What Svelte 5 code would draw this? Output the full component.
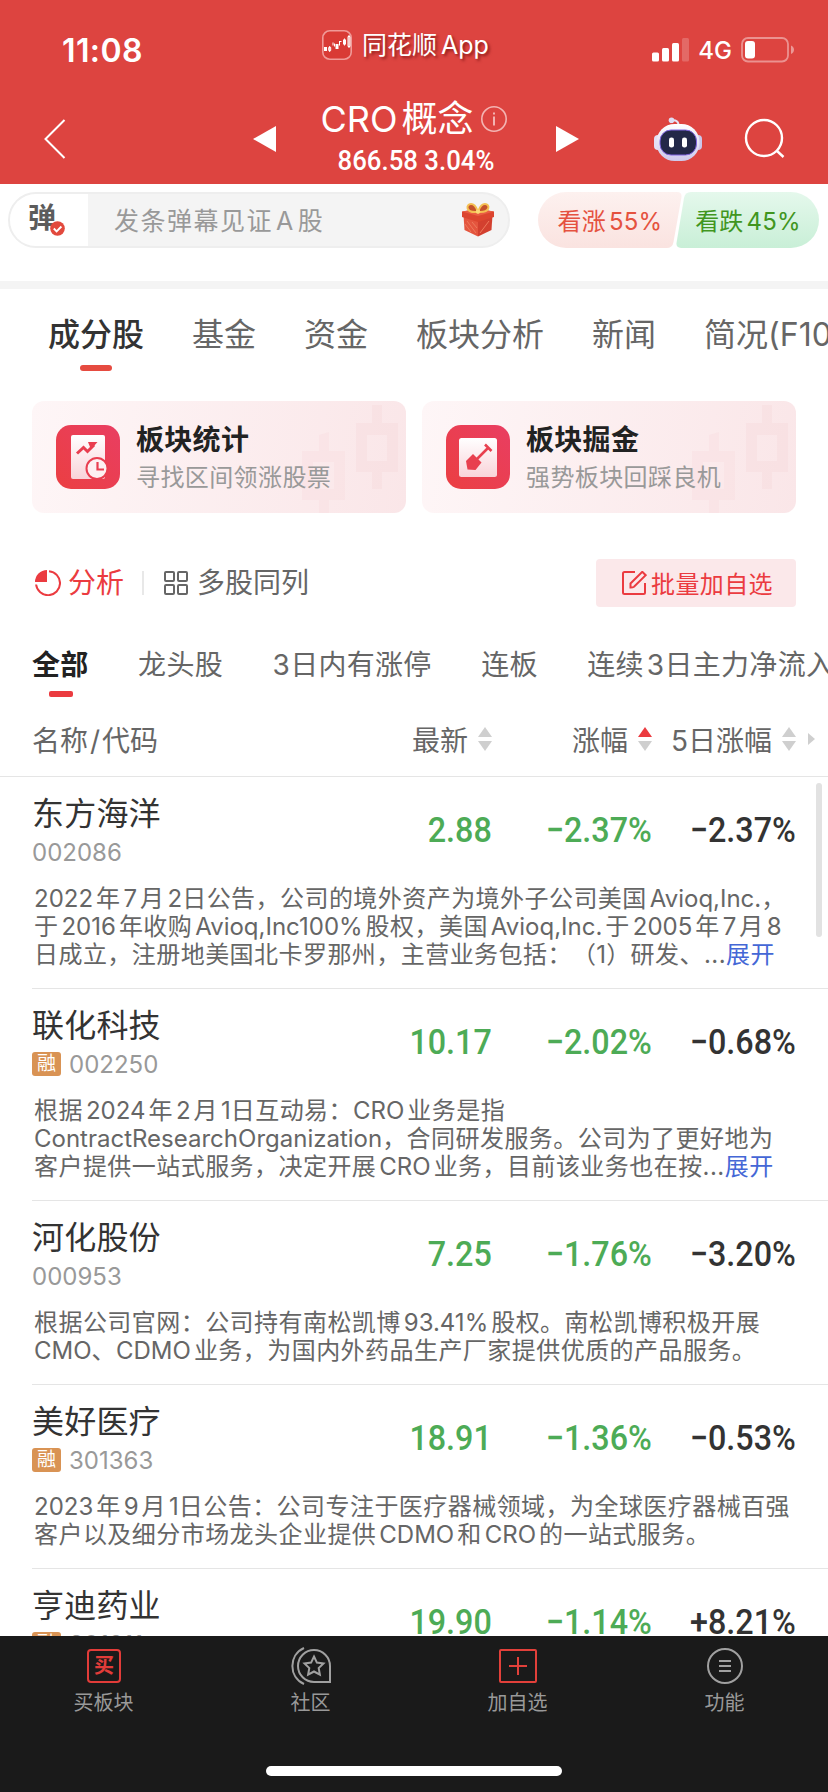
<script lang="ts">
  type Stock = {
    name: string;
    code: string;
    margin: boolean;
    price: string;
    change: string;
    change5: string;
    lines: string[];
    more?: boolean;
  };

  const tabs = ['成分股', '基金', '资金', '板块分析', '新闻', '简况(F10)'];
  const filters = ['全部', '龙头股', '3日内有涨停', '连板', '连续3日主力净流入'];
  let activeTab = $state(0);
  let activeFilter = $state(0);

  const stocks: Stock[] = [
    {
      name: '东方海洋', code: '002086', margin: false,
      price: '2.88', change: '−2.37%', change5: '−2.37%', more: true,
      lines: [
        '2022年7月2日公告，公司的境外资产为境外子公司美国Avioq,Inc.，',
        '于2016年收购Avioq,Inc100%股权，美国Avioq,Inc.于2005年7月8',
        '日成立，注册地美国北卡罗那州，主营业务包括：（1）研发、...'
      ]
    },
    {
      name: '联化科技', code: '002250', margin: true,
      price: '10.17', change: '−2.02%', change5: '−0.68%', more: true,
      lines: [
        '根据2024年2月1日互动易：CRO业务是指',
        'ContractResearchOrganization，合同研发服务。公司为了更好地为',
        '客户提供一站式服务，决定开展CRO业务，目前该业务也在按...'
      ]
    },
    {
      name: '河化股份', code: '000953', margin: false,
      price: '7.25', change: '−1.76%', change5: '−3.20%',
      lines: [
        '根据公司官网：公司持有南松凯博93.41%股权。南松凯博积极开展',
        'CMO、CDMO业务，为国内外药品生产厂家提供优质的产品服务。'
      ]
    },
    {
      name: '美好医疗', code: '301363', margin: true,
      price: '18.91', change: '−1.36%', change5: '−0.53%',
      lines: [
        '2023年9月1日公告：公司专注于医疗器械领域，为全球医疗器械百强',
        '客户以及细分市场龙头企业提供CDMO和CRO的一站式服务。'
      ]
    },
    {
      name: '亨迪药业', code: '301211', margin: true,
      price: '19.90', change: '−1.14%', change5: '+8.21%',
      lines: []
    }
  ];

  // split into latin and chinese runs; latin gets a little air,
  // except next to punctuation and before 日
  function runs(text: string) {
    const parts = text.match(/[A-Za-z0-9%,.]+|[^A-Za-z0-9%,.]+/g) ?? [];
    return parts.map((run, i) => {
      const latin = /^[A-Za-z0-9]/.test(run);
      const before = parts[i - 1] ?? '';
      const after = parts[i + 1] ?? '';
      return {
        run,
        latin,
        before: latin && before !== '' && !/[，。、：（）]$/.test(before),
        after: latin && after !== '' && !/^[，。、：（）日]/.test(after)
      };
    });
  }
</script>

{#snippet mixed(text: string)}{#each runs(text) as part}<span class:latin={part.latin} class:before={part.before} class:after={part.after}>{part.run}</span>{/each}{/snippet}

{#snippet sorter(up: boolean)}
  <svg class="sorter" width="14" height="24" viewBox="0 0 14 24">
    <path d="M7 0L14 10H0z" fill={up ? '#eb3b40' : '#cfcfcf'} />
    <path d="M7 24L14 14H0z" fill="#cfcfcf" />
  </svg>
{/snippet}

{#snippet candles()}
  <svg class="candles" width="374" height="112" viewBox="0 0 374 112">
    <path d="M340 4h10v18h16v49h-16v17h-10V71h-16V22h16zM335 34v26h20V34z" fill="#f6d3d6" fill-rule="evenodd" opacity=".3" />
    <path d="M287 34l10-3v19h16v49h-16v13h-10V99h-17V50h17zM281 61v27h21V61z" fill="#f6d3d6" fill-rule="evenodd" opacity=".22" />
  </svg>
{/snippet}

<div class="page">
  <header>
    <div class="status">
      <span class="time">11:08</span>
      <div class="app-name">
        <svg width="30" height="30" viewBox="0 0 30 30">
          <rect x=".8" y=".8" width="28.4" height="28.4" rx="7" fill="#d93a35" stroke="#f09a98" stroke-width="1.6" />
          <path d="M2 17h3v4H2zM13.500 14h3v5h-3zM21 9.500h3v5h-3z" fill="#fff" />
          <path d="M6.700 17.500h2v3h-2zM7.700 16v6M11 12.500v3M12.500 13.500v3M17.500 11.500v4M17 11.500h2.500M22.500 8.500v7M26 6.500h2v10h-2zM27 5v13" fill="none" stroke="#fff" stroke-width="1" />
        </svg>
        <span>{@render mixed('同花顺App')}</span>
      </div>
      <div class="signal">
        <svg width="37" height="24" viewBox="0 0 37 24">
          <rect x="0" y="14.500" width="7" height="9" rx="1.500" fill="#fff" />
          <rect x="10" y="10" width="7" height="13.500" rx="1.500" fill="#fff" />
          <rect x="20" y="5" width="7" height="18.500" rx="1.500" fill="#fff" />
          <rect x="30" y="0" width="7" height="23.500" rx="1.500" fill="#fff" opacity=".2" />
        </svg>
        <span>4G</span>
        <svg width="54" height="26" viewBox="0 0 54 26">
          <rect x="1" y="1" width="46" height="23.500" rx="6" fill="none" stroke="#fff" stroke-width="1.800" opacity=".42" />
          <rect x="4" y="4" width="10" height="17.500" rx="3" fill="#fff" />
          <path d="M50 8.500c4 1.500 4 7 0 8.500z" fill="#fff" opacity=".45" />
        </svg>
      </div>
    </div>
    <nav class="title-bar">
      <svg class="back" width="24" height="42" viewBox="0 0 24 42"><path d="M21.500 2L2.500 21l19 19" fill="none" stroke="#fff" stroke-width="2" /></svg>
      <svg class="prev" width="23" height="26" viewBox="0 0 23 26"><path d="M0 13L23 0v26z" fill="#fff" /></svg>
      <div class="title">
        <h1>
          {@render mixed('CRO概念')}
          <svg width="26" height="26" viewBox="0 0 26 26">
            <circle cx="13" cy="13" r="12.200" fill="none" stroke="#f3b4b2" stroke-width="1.600" />
            <path d="M13 10.500v9M13 6.500v2" stroke="#f3b4b2" stroke-width="2" />
          </svg>
        </h1>
        <p>866.58 3.04%</p>
      </div>
      <svg class="next" width="23" height="26" viewBox="0 0 23 26"><path d="M23 13L0 0v26z" fill="#fff" /></svg>
      <svg class="robot" width="48" height="45" viewBox="0 0 48 45">
        <defs>
          <linearGradient id="shell" x1="0" y1="0" x2="0" y2="1">
            <stop offset="0" stop-color="#fff" />
            <stop offset="1" stop-color="#cdc9ec" />
          </linearGradient>
        </defs>
        <path d="M17 3.500c5-1 8 1 7.500 6" fill="none" stroke="#e6e2f4" stroke-width="2" />
        <circle cx="17.500" cy="3.300" r="2.800" fill="#dfdcf2" />
        <rect x="0" y="18" width="8" height="15" rx="4" fill="#e4e0f5" />
        <rect x="40" y="18" width="8" height="15" rx="4" fill="#cbc7ea" />
        <rect x="2.500" y="7" width="43" height="37" rx="18" fill="url(#shell)" />
        <rect x="6" y="13" width="36.500" height="25" rx="11" fill="#232848" stroke="#8065e0" stroke-width="1" />
        <rect x="15" y="20.500" width="5" height="10" rx="2.300" fill="#fff" />
        <rect x="28" y="20.500" width="5" height="10" rx="2.300" fill="#fff" />
      </svg>
      <svg class="search" width="42" height="42" viewBox="0 0 42 42">
        <circle cx="20" cy="20" r="18" fill="none" stroke="#fff" stroke-width="2.400" />
        <path d="M32.500 32.500l7 6.500" stroke="#fff" stroke-width="2.400" />
      </svg>
    </nav>
  </header>

  <section class="danmu">
    <div class="danmu-input">
      <div class="danmu-toggle">
        <b>弹</b>
        <svg width="15" height="15" viewBox="0 0 15 15">
          <circle cx="7.500" cy="7.500" r="7.300" fill="#e2493d" />
          <path d="M3.800 7.500l2.800 2.800 4.800-4.800" fill="none" stroke="#fff" stroke-width="1.900" />
        </svg>
      </div>
      <span class="placeholder">{@render mixed('发条弹幕见证A股')}</span>
      <svg class="gift" width="32" height="34" viewBox="0 0 32 34">
        <path d="M1.500 12L16 16.500v17L2.500 27z" fill="#e4553e" />
        <path d="M30.500 12L16 16.500v17L29.500 27z" fill="#d3402f" />
        <path d="M0 8.500L16 6l16 2.500v5.500L16 19 0 14z" fill="#dc452f" />
        <path d="M0 8.500L16 6l16 2.500L16 13z" fill="#e95c43" />
        <path d="M5 18l9 12M10 19l5 6M27 18l-9 12M3 21l6 8" stroke="#ee7a5c" stroke-width="1" />
        <path d="M15 9C3 10 4 1 9 1s6 6 7 8c1-2 2-8 7-8s6 9-7 8" fill="#c4512b" stroke="#f4bf52" stroke-width="2" />
        <circle cx="16" cy="8.500" r="2.200" fill="#fbd876" />
      </svg>
    </div>
    <div class="votes">
      <button class="vote up">
        <svg width="144" height="56" viewBox="0 0 144 56">
          <defs><linearGradient id="rise" x1="0" y1="0" x2="0" y2="1"><stop offset="0" stop-color="#fdf1ef" /><stop offset="1" stop-color="#fae3e0" /></linearGradient></defs>
          <path d="M28 0h111q5 0 4.500 5l-8 45q-1 6-7 6H28a28 28 0 010-56z" fill="url(#rise)" />
        </svg>
        <span>{@render mixed('看涨55%')}</span>
      </button>
      <button class="vote down">
        <svg width="144" height="56" viewBox="0 0 144 56">
          <defs><linearGradient id="fall" x1="0" y1="0" x2="0" y2="1"><stop offset="0" stop-color="#e5f8ec" /><stop offset="1" stop-color="#c9efd7" /></linearGradient></defs>
          <path d="M115 0a28 28 0 010 56H5q-5 0-4.500-5L8 6q1-6 7-6z" fill="url(#fall)" />
        </svg>
        <span>{@render mixed('看跌45%')}</span>
      </button>
    </div>
  </section>

  <nav class="tabs">
    {#each tabs as tab, i}
      <button class:active={activeTab === i} onclick={() => (activeTab = i)}>{tab}</button>
    {/each}
  </nav>

  <section class="cards">
    <div class="card">
      {@render candles()}
      <svg class="card-icon" width="64" height="64" viewBox="0 0 64 64">
        <defs>
          <linearGradient id="tile" x1="0" y1="1" x2="1" y2="0"><stop offset="0" stop-color="#eb3f42" /><stop offset="1" stop-color="#e93e62" /></linearGradient>
          <linearGradient id="paper" x1="0" y1="0" x2="0" y2="1"><stop offset="0" stop-color="#fff" /><stop offset="1" stop-color="#f9d3d9" /></linearGradient>
        </defs>
        <rect width="64" height="64" rx="15" fill="url(#tile)" />
        <rect x="15" y="10" width="34" height="44" rx="2" fill="url(#paper)" />
        <path d="M21 28.500l6.500-6 4 4L38 20" fill="none" stroke="#e93e50" stroke-width="3" />
        <path d="M32 17h9.500L35 24.500z" fill="#e93e50" />
        <circle cx="41" cy="43.500" r="10.500" fill="#fdf0f2" stroke="#e93e50" stroke-width="2" />
        <path d="M41.500 37v7.500h6.500" fill="none" stroke="#e93e50" stroke-width="2.200" />
      </svg>
      <div class="card-text">
        <h2>板块统计</h2>
        <p>寻找区间领涨股票</p>
      </div>
    </div>
    <div class="card">
      {@render candles()}
      <svg class="card-icon" width="64" height="64" viewBox="0 0 64 64">
        <rect width="64" height="64" rx="15" fill="url(#tile)" />
        <rect x="13" y="13" width="38" height="39" rx="2.500" fill="url(#paper)" />
        <path d="M31 34l11.500-11.500M39 19.500l6.500 6.500" fill="none" stroke="#e8404f" stroke-width="2.600" />
        <path d="M27 29l8.500 8.500-6 7.500-8-.5-1.500-8.500z" fill="#e8404f" />
      </svg>
      <div class="card-text">
        <h2>板块掘金</h2>
        <p>强势板块回踩良机</p>
      </div>
    </div>
  </section>

  <section class="tools">
    <button class="tool red">
      <svg width="26" height="26" viewBox="0 0 26 26">
        <path d="M12 0v12H0A12 12 0 0112 0z" fill="#eb3b40" />
        <path d="M14 1.200A12 12 0 111.100 14.500" fill="none" stroke="#eb3b40" stroke-width="2" />
      </svg>
      分析
    </button>
    <i class="bar"></i>
    <button class="tool">
      <svg width="24" height="24" viewBox="0 0 24 24" fill="none" stroke="#666" stroke-width="2">
        <rect x="1" y="1" width="9" height="9" rx="1" />
        <rect x="14" y="1" width="9" height="9" rx="1" />
        <rect x="1" y="14" width="9" height="9" rx="1" />
        <rect x="14" y="14" width="9" height="9" rx="1" />
      </svg>
      多股同列
    </button>
    <button class="batch">
      <svg width="25" height="25" viewBox="0 0 25 25" fill="none" stroke="#eb3b40" stroke-width="2">
        <path d="M13 1H2.500Q1 1 1 2.500v19Q1 23 2.500 23h19q1.500 0 1.500-1.500V12" />
        <path d="M8.500 16.500v-4L20.300.8l3.400 3.400L12 15.800q-1 .7-3.500.7z" />
      </svg>
      <span>批量加自选</span>
    </button>
  </section>

  <nav class="filters">
    {#each filters as filter, i}
      <button class:active={activeFilter === i} onclick={() => (activeFilter = i)}>{@render mixed(filter)}</button>
    {/each}
  </nav>

  <div class="table-head">
    <span class="col-name">名称<span class="slash">/</span>代码</span>
    <span class="col-price">最新 {@render sorter(false)}</span>
    <span class="col-change">涨幅 {@render sorter(true)}</span>
    <span class="col-change5"><span>{@render mixed('5日涨幅')}</span> {@render sorter(false)}</span>
    <svg class="more-cols" width="7" height="12" viewBox="0 0 7 12"><path d="M0 0l7 6-7 6z" fill="#cfcfcf" /></svg>
  </div>

  <main>
    <i class="scrollbar"></i>
    {#each stocks as stock}
      <article>
        <div class="quote">
          <div class="col-name">
            <h3>{stock.name}</h3>
            <div class="code">
              {#if stock.margin}<em>融</em>{/if}
              {stock.code}
            </div>
          </div>
          <span class="num green col-price">{stock.price}</span>
          <span class="num green col-change">{stock.change}</span>
          <span class="num col-change5">{stock.change5}</span>
        </div>
        <div class="desc">
          {#each stock.lines as line, i}
            <p>{@render mixed(line)}{#if stock.more && i === stock.lines.length - 1}<a href="#more">展开</a>{/if}</p>
          {/each}
        </div>
      </article>
    {/each}
  </main>

  <footer>
    <div class="actions">
      <button>
        <svg width="40" height="38" viewBox="0 0 40 38">
          <rect x="4" y="3" width="32" height="32" rx="3" fill="none" stroke="#e23c39" stroke-width="2" />
          <text x="20" y="26" text-anchor="middle" class="buy">买</text>
        </svg>
        买板块
      </button>
      <button>
        <svg width="40" height="38" viewBox="0 0 40 38" fill="none" stroke="#a0a0a0" stroke-width="2">
          <path d="M23 3a16 16 0 1 0 0 32h16V19A16 16 0 0 0 23 3z" />
          <path d="M13 1C-2.500 8-2.500 30 13 37" />
          <path d="M23 9.500l2.900 6.100 6.600.9-4.800 4.600 1.200 6.600-5.900-3.200-5.900 3.200 1.200-6.600-4.800-4.600 6.600-.9z" />
        </svg>
        社区
      </button>
      <button>
        <svg width="40" height="38" viewBox="0 0 40 38" fill="none" stroke="#e2403a" stroke-width="2">
          <rect x="2" y="3" width="36" height="32" rx="1" />
          <path d="M11 19h18M20 10v18" />
        </svg>
        加自选
      </button>
      <button>
        <svg width="40" height="38" viewBox="0 0 40 38" fill="none" stroke="#a0a0a0" stroke-width="2">
          <circle cx="20" cy="19" r="17" />
          <path d="M14 14h12M14 19h12M14 24h12" />
        </svg>
        功能
      </button>
    </div>
    <i class="home"></i>
  </footer>
</div>

<style>
  :global(body) {
    margin: 0;
    background: #fff;
  }

  .page {
    display: flex;
    flex-direction: column;
    width: 828px;
    height: 1792px;
    overflow: hidden;
    font-family: Inter, 'Noto Sans CJK SC', sans-serif;
    font-weight: 400;
    text-spacing-trim: space-all;
    color: #666;
    background: #fff;
  }

  .page * {
    box-sizing: border-box;
  }

  h1, h2, h3, p {
    margin: 0;
    font-weight: 400;
  }

  button {
    padding: 0;
    border: 0;
    background: none;
    font: inherit;
    color: inherit;
    white-space: nowrap;
  }

  svg {
    display: block;
    flex: none;
  }

  .before {
    margin-left: 3px;
  }

  .after {
    margin-right: 3px;
  }

  header {
    flex: none;
    height: 184px;
    background: #dd4440;
    color: #fff;
  }

  .status {
    display: flex;
    align-items: center;
    height: 94px;
    padding: 0 33px 0 62px;
  }

  .time {
    width: 260px;
    padding-top: 6px;
    font-size: 32px;
    font-weight: 600;
    letter-spacing: 0.4px;
  }

  .app-name {
    display: flex;
    align-items: center;
    gap: 10px;
    margin-top: -4px;
    font-size: 25px;
    line-height: 30px;
    text-shadow: 2px 2px 3px rgba(90, 0, 0, 0.6);
  }

  .app-name span {
    margin-top: -1px;
  }

  .app-name .before {
    margin-left: 4px;
  }

  .signal {
    display: flex;
    align-items: center;
    gap: 9px;
    margin-left: auto;
    padding-top: 6px;
    font-size: 24px;
    font-weight: 500;
  }

  .title-bar {
    display: flex;
    align-items: center;
    height: 90px;
    padding: 0 42px 0 43px;
  }

  .prev {
    margin-left: 186px;
  }

  .title {
    width: 280px;
    text-align: center;
  }

  .title h1 {
    display: flex;
    align-items: center;
    justify-content: center;
    height: 46px;
    margin-top: -2px;
    padding-right: 5px;
    font-size: 36px;
    line-height: 46px;
  }

  .title h1 .after {
    margin-right: 4px;
  }

  .title h1 svg {
    margin-left: 7px;
  }

  .title p {
    height: 38px;
    font: 500 28px/38px Roboto, sans-serif;
    transform: scaleX(0.92);
  }

  .robot {
    margin-left: 75px;
  }

  .search {
    margin-left: auto;
  }

  .danmu {
    display: flex;
    flex: none;
    justify-content: space-between;
    height: 105px;
    padding: 8px 8px 0;
    border-bottom: 8px solid #f4f4f4;
  }

  .danmu-input {
    display: flex;
    align-items: center;
    width: 502px;
    height: 56px;
    padding-right: 14px;
    overflow: hidden;
    border: 2px solid #eee;
    border-radius: 28px;
    background: #f4f4f4;
  }

  .danmu-toggle {
    position: relative;
    width: 78px;
    height: 100%;
    padding-left: 18px;
    background: #fff;
  }

  .danmu-toggle b {
    font-size: 28px;
    line-height: 48px;
    color: #5c5c5c;
  }

  .danmu-toggle svg {
    position: absolute;
    left: 40px;
    top: 27px;
  }

  .placeholder {
    flex: 1;
    padding: 0 0 2px 26px;
    font-size: 25px;
    letter-spacing: 1.5px;
    color: #999;
  }

  .votes {
    display: flex;
  }

  .vote {
    position: relative;
    width: 144px;
    height: 56px;
    padding-bottom: 2px;
    font-size: 24px;
    letter-spacing: 0.2px;
    color: #e5523f;
  }

  .vote svg {
    position: absolute;
    inset: 0;
  }

  .vote span {
    position: relative;
  }

  .vote.down {
    margin-left: -6px;
    color: #41961f;
  }

  .tabs {
    display: flex;
    flex: none;
    gap: 48px;
    height: 112px;
    padding: 26px 0 0 48px;
  }

  .tabs button {
    position: relative;
    height: 40px;
    font-size: 32px;
    line-height: 40px;
  }

  .tabs .active {
    font-weight: 500;
    color: #333;
  }

  .tabs .active::after {
    content: '';
    position: absolute;
    left: 32px;
    top: 50px;
    width: 32px;
    height: 6px;
    border-radius: 3px;
    background: #e64b40;
  }

  .cards {
    display: flex;
    flex: none;
    gap: 16px;
    padding: 0 32px;
  }

  .card {
    position: relative;
    display: flex;
    flex: 1;
    height: 112px;
    padding: 24px;
    border-radius: 12px;
    background: linear-gradient(100deg, #fef6f7, #fae6e8);
  }

  .candles {
    position: absolute;
    inset: 0;
  }

  .card-icon,
  .card-text {
    position: relative;
  }

  .card-text {
    margin: -4px 0 0 16px;
  }

  .card h2 {
    font-size: 28px;
    font-weight: 700;
    letter-spacing: 0.3px;
    line-height: 38px;
    color: #222;
  }

  .card p {
    font-size: 24px;
    letter-spacing: 0.4px;
    line-height: 38px;
    color: #999;
  }

  .tools {
    display: flex;
    flex: none;
    align-items: center;
    height: 140px;
    padding: 0 32px 0 35px;
  }

  .tool {
    display: flex;
    align-items: center;
    gap: 9px;
    font-size: 28px;
    line-height: 40px;
  }

  .tool svg {
    margin-top: -1px;
  }

  .tool.red {
    gap: 7px;
    color: #eb3b40;
  }

  .bar {
    width: 2px;
    height: 24px;
    margin: 0 20px 0 18px;
    background: #e8e8e8;
  }

  .batch {
    display: flex;
    align-items: center;
    gap: 4px;
    width: 200px;
    height: 48px;
    margin-left: auto;
    padding-left: 26px;
    border-radius: 4px;
    background: #fbe8ea;
    font-size: 24px;
    letter-spacing: 0.4px;
    color: #eb3b40;
  }

  .batch span {
    padding-bottom: 2px;
  }

  .filters {
    display: flex;
    flex: none;
    gap: 49.5px;
    height: 50px;
    padding: 0 0 0 32px;
    margin-top: -8px;
  }

  .filters button {
    position: relative;
    height: 40px;
    font-size: 28px;
    letter-spacing: 0.3px;
    line-height: 41px;
  }

  .filters .active {
    font-weight: 700;
    color: #222;
  }

  .filters .active::after {
    content: '';
    position: absolute;
    left: 17px;
    top: 46px;
    width: 24px;
    height: 6px;
    border-radius: 2px;
    background: #eb3b40;
  }

  .table-head {
    display: flex;
    flex: none;
    align-items: center;
    height: 82px;
    padding: 6px 0 0 32px;
    border-bottom: 1px solid #e5e5e5;
    font-size: 28px;
  }

  .slash {
    margin: 0 2px;
  }

  .col-name {
    width: 300px;
  }

  .col-price,
  .col-change,
  .col-change5 {
    display: flex;
    align-items: center;
    justify-content: flex-end;
    gap: 10px;
    width: 160px;
    white-space: nowrap;
  }

  .col-change5 {
    width: 144px;
  }

  .more-cols {
    margin-left: 12px;
  }

  main {
    position: relative;
    flex: 1;
    overflow: hidden;
  }

  .scrollbar {
    position: absolute;
    right: 6px;
    top: 6px;
    width: 6px;
    height: 154px;
    border-radius: 3px;
    background: #e2e2e2;
  }

  article {
    margin-left: 32px;
    padding-bottom: 17px;
    border-bottom: 1px solid #e5e5e5;
  }

  .quote {
    display: flex;
    height: 108px;
    padding-top: 16px;
  }

  h3 {
    font-size: 32px;
    letter-spacing: 0.2px;
    line-height: 42px;
    color: #333;
  }

  .code {
    display: flex;
    align-items: center;
    gap: 8px;
    height: 34px;
    font-size: 24px;
    line-height: 33px;
    color: #999;
  }

  .code em {
    width: 29px;
    height: 24px;
    border-radius: 3px;
    background: #d99354;
    font-size: 19px;
    font-style: normal;
    line-height: 24px;
    text-align: center;
    color: #fff;
  }

  .num {
    height: 74px;
    font: 500 35.5px/74px Roboto, sans-serif;
    color: #333;
    transform: scaleX(0.91);
    transform-origin: calc(100% - 2px) 50%;
  }

  .num.green {
    color: #4dab56;
  }

  .desc {
    padding: 0 0 2px 2px;
    font-size: 24px;
    line-height: 28px;
    letter-spacing: 0.45px;
    white-space: nowrap;
  }

  .desc .latin {
    letter-spacing: 0;
  }

  .desc a {
    color: #4467d6;
    text-decoration: none;
  }

  footer {
    display: flex;
    flex: none;
    flex-direction: column;
    align-items: center;
    justify-content: space-between;
    height: 156px;
    padding: 11px 0 16px;
    background: #1a1a1a;
  }

  .actions {
    display: flex;
    width: 100%;
  }

  .actions button {
    display: flex;
    flex: 1;
    flex-direction: column;
    align-items: center;
    gap: 3px;
    font-size: 20px;
    line-height: 30px;
    color: #999;
  }

  .buy {
    font-size: 20px;
    font-weight: 700;
    fill: #e23c39;
    stroke: none;
  }

  .home {
    width: 296px;
    height: 10px;
    border-radius: 5px;
    background: #fff;
  }
</style>
